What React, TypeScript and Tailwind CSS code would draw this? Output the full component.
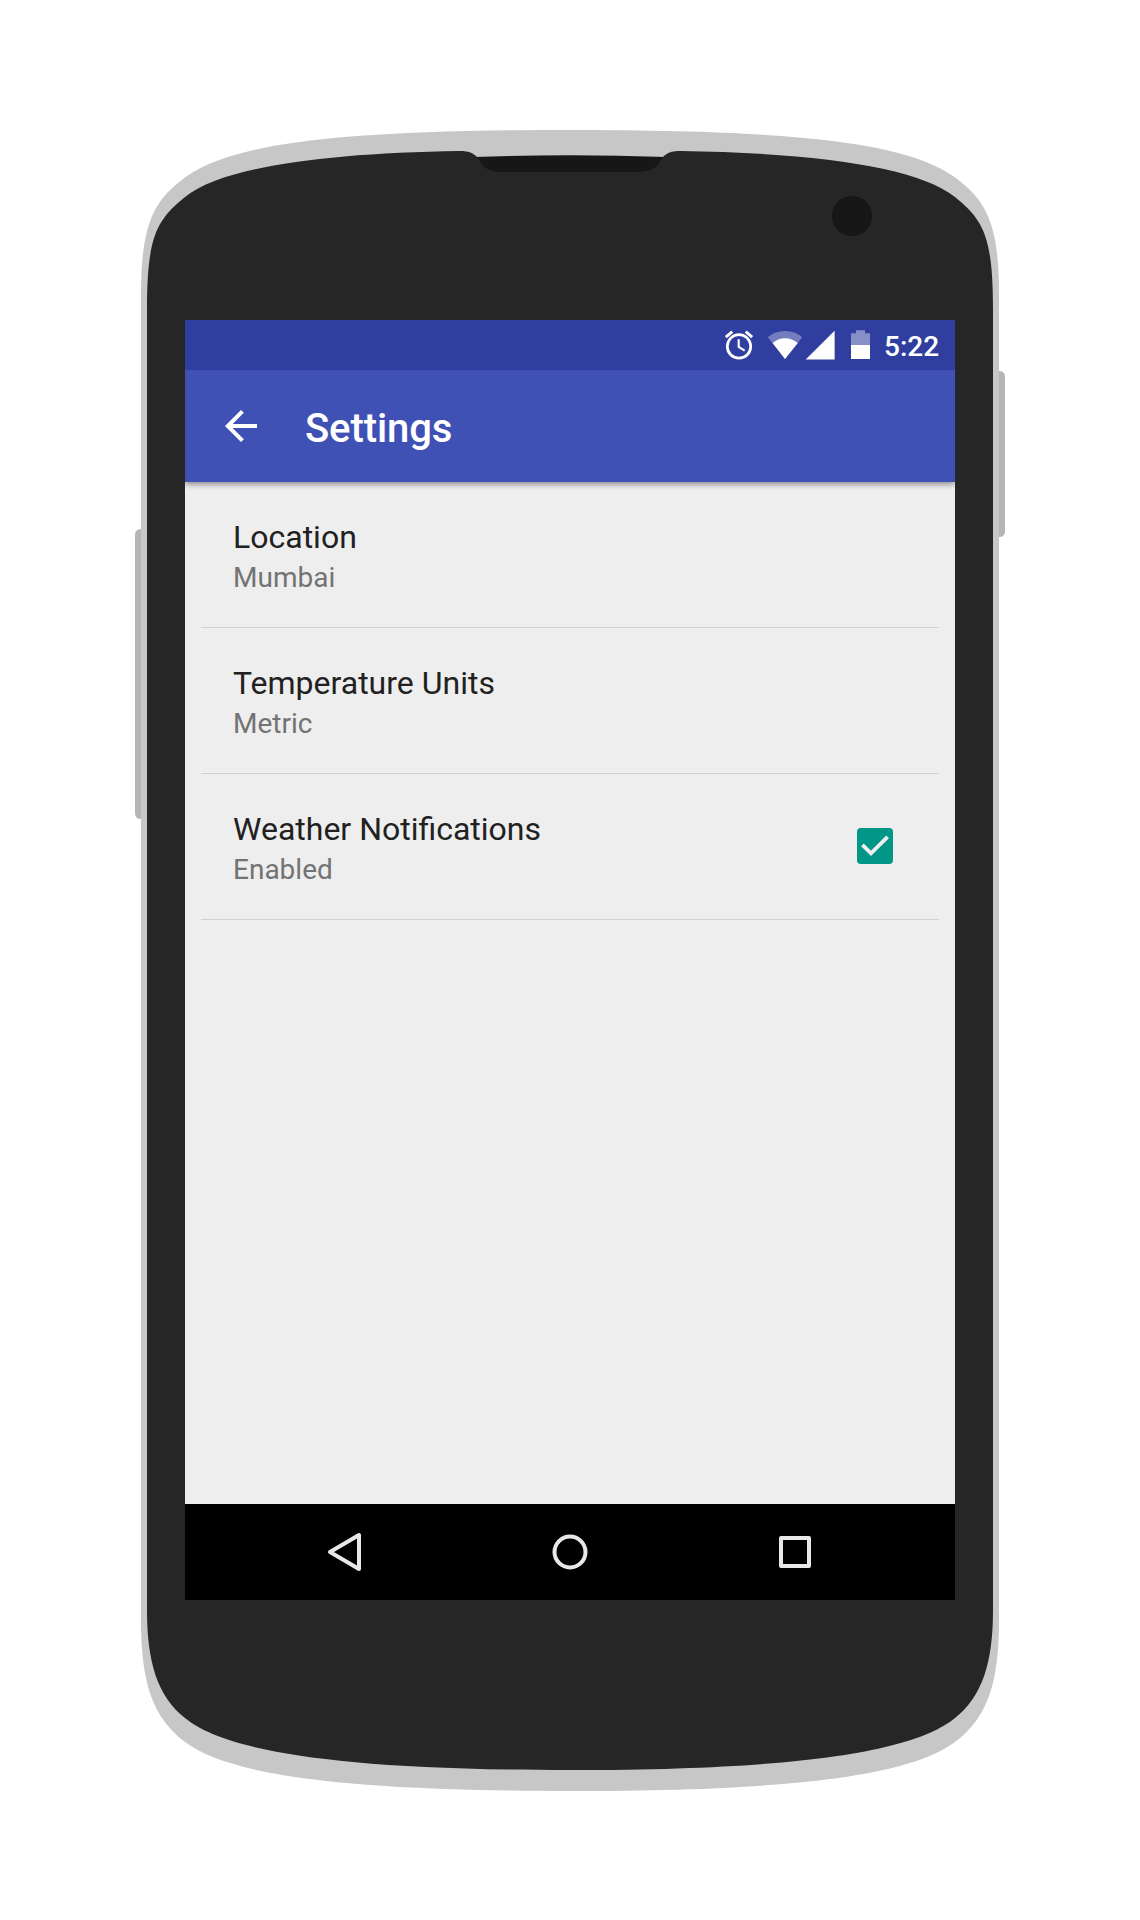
import React from "react";

function PhoneBody() {
  return (
    <svg className="absolute inset-0" width="1140" height="1920" viewBox="0 0 1140 1920" aria-hidden="true">
      <path d="M141 529Q135 529 135 535V813Q135 819 141 819Z" fill="#b5b5b5" />
      <path d="M999 371Q1005 371 1005 377V531Q1005 537 999 537Z" fill="#b5b5b5" />
      <path
        fill="#c7c7c7"
        d="M141 295C141 222 154 200 187 176C235 143 340 130 570 130C800 130 905 143 953 176C986 200 999 222 999 295V1620C999 1684 987 1718 955 1742C913 1773 810 1791 570 1791C330 1791 227 1773 185 1742C153 1718 141 1684 141 1620Z"
      />
      <path fill="#171717" d="M474 157Q570 153.400 666 157V174H474Z" />
      <path
        fill="#262626"
        d="M147 310C147 235 157 220 185 197C222 167 325 153 460 151C469 151 473 153 477 157C484 166 483 172 507 172H633C657 172 656 166 663 157C667 153 671 151 680 151C815 153 918 167 955 197C983 220 993 235 993 310V1610C993 1661 983 1696 955 1718C917 1749 815 1770 570 1770C325 1770 223 1749 185 1718C157 1696 147 1661 147 1610Z"
      />
      <circle cx="852" cy="216" r="20" fill="#171717" />
    </svg>
  );
}

function StatusBar() {
  return (
    <div className="relative z-10 flex h-[50px] items-center justify-end bg-[#303e9f] pr-4 text-white">
      <svg width="30" height="30" viewBox="724 330 30 30" fill="none" stroke="currentColor" strokeWidth="2.7">
        <circle cx="739" cy="346.400" r="11.700" />
        <path d="M725.800 337.200L732.300 331.700M745.700 331.700L752.200 337.200" strokeWidth="2.900" />
        <path d="M738.700 339.300V347L744.700 350.700" strokeWidth="2.100" />
      </svg>
      <svg className="ml-[13px]" width="37" height="30" viewBox="767 330 37 30" fill="currentColor">
        <path opacity=".33" d="M785 359L767.800 337.300Q775 331 785 331T802.200 337.300Z" />
        <path d="M785 359L772.600 343Q778 338.300 785 338.300T797.800 343Z" />
      </svg>
      <svg className="ml-px" width="30" height="30" viewBox="805 330 30 30" fill="currentColor">
        <path d="M805.700 359.500H834.600V330.800Z" />
      </svg>
      <svg className="ml-[15px]" width="21" height="30" viewBox="850 330 21 30" fill="currentColor">
        <path opacity=".42" d="M851 333.300H856V330.200H865V333.300H870V345H851Z" />
        <path d="M851 345H870V359H851Z" />
      </svg>
      <span className="ml-[13px] w-[55px] pt-[3px] text-[28px] leading-none font-medium whitespace-nowrap">5:22</span>
    </div>
  );
}

function Toolbar() {
  return (
    <header className="relative flex h-28 items-center bg-[#3f51b5] pl-8 text-white shadow-[0_2px_6px_rgba(0,0,0,0.45)]">
      <svg width="48" height="48" viewBox="0 0 24 24" fill="currentColor">
        <path d="M20 11H7.830l5.590-5.590L12 4l-8 8 8 8 1.410-1.410L7.830 13H20v-2z" />
      </svg>
      <h1 className="ml-10 pt-1.5 text-[40px] leading-none font-medium tracking-[-0.1px]">Settings</h1>
    </header>
  );
}

function Checkbox() {
  return (
    <span role="checkbox" aria-checked="true" className="mb-0.5 flex size-9 rounded bg-[#009688]">
      <svg width="36" height="36" viewBox="0 0 36 36" fill="none" stroke="#eeeeee" strokeWidth="3.800">
        <path d="M5.400 16.800L14 25.400L30.600 8.800" />
      </svg>
    </span>
  );
}

const rows = [
  { title: "Location", summary: "Mumbai" },
  { title: "Temperature Units", summary: "Metric" },
  { title: "Weather Notifications", summary: "Enabled", checked: true },
];

export default function App() {
  return (
    <div className="relative h-[1920px] w-[1140px] overflow-hidden bg-white pt-[320px] pl-[185px] font-['Roboto',sans-serif]">
      <PhoneBody />
      <main className="relative flex h-[1280px] w-[770px] flex-col overflow-hidden bg-[#eeeeee]">
        <StatusBar />
        <Toolbar />
        <ul className="flex-1 px-4">
          {rows.map((row) => (
            <li key={row.title} className="flex h-[146px] items-center justify-between border-b border-[#d1d1d1] pr-[46px] pl-8">
              <div className="pt-[3px]">
                <p className="text-[32px] leading-[42px] text-[#212121]">{row.title}</p>
                <p className="pt-px text-[28px] leading-[38px] text-[#737373]">{row.summary}</p>
              </div>
              {row.checked && <Checkbox />}
            </li>
          ))}
        </ul>
        <nav className="flex h-24 items-center justify-center gap-[185px] bg-black text-[#e8e8e8]">
          <svg width="40" height="40" viewBox="0 0 40 40" fill="none" stroke="currentColor" strokeWidth="4" strokeLinejoin="round">
            <path d="M5 20L34 3V37Z" />
          </svg>
          <svg width="40" height="40" viewBox="0 0 40 40" fill="none" stroke="currentColor" strokeWidth="4">
            <circle cx="20" cy="20" r="15.500" />
          </svg>
          <svg width="40" height="40" viewBox="0 0 40 40" fill="none" stroke="currentColor" strokeWidth="4" strokeLinejoin="round">
            <path d="M6 6H34V34H6Z" />
          </svg>
        </nav>
      </main>
    </div>
  );
}
